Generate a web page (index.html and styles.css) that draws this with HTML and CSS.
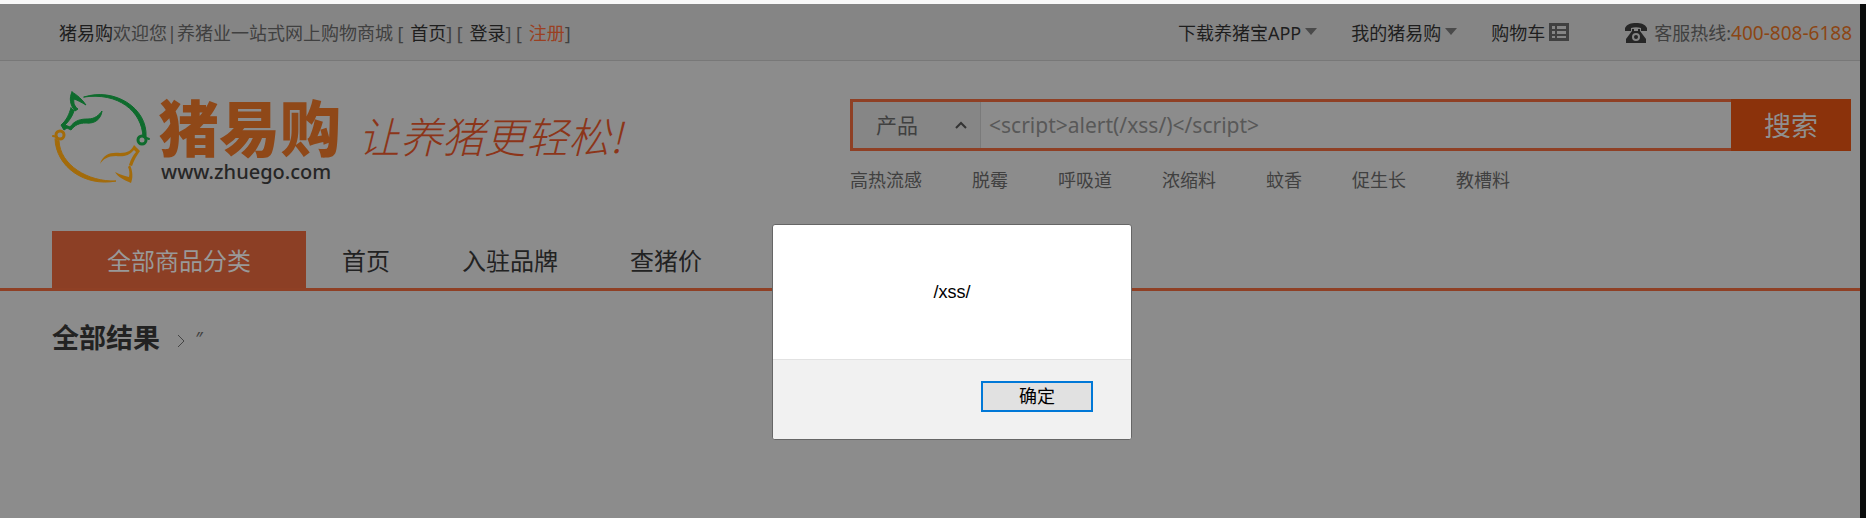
FILE: index.html
```html
<!DOCTYPE html>
<html lang="zh-CN">
<head>
<meta charset="utf-8">
<title>猪易购</title>
<link rel="stylesheet" href="styles.css">
</head>
<body>
<div class="page">
  <header class="topbar">
    <p class="welcome"><a class="dark" href="#">猪易购</a>欢迎您|养猪业一站式网上购物商城 [ <a class="dark entry" href="#">首页</a>] [ <a class="dark entry" href="#">登录</a>] [ <a class="register entry" href="#">注册</a>]</p>
    <nav class="quick">
      <a class="quick-link" href="#">下载养猪宝APP<span class="arrow"></span></a>
      <a class="quick-link" href="#">我的猪易购<span class="arrow"></span></a>
      <a class="quick-link" href="#">购物车<svg class="cart-icon" viewBox="0 0 20 18"><path fill="#404040" d="M0 0h20v18H0z"/><path fill="#858585" d="M3 3h3v3H3zM8 3h9v3H8zM3 8h3v3H3zM8 8h9v3H8zM3 13h3v2H3zM8 13h9v2H8z"/></svg></a>
    </nav>
    <p class="hotline"><svg class="phone-icon" viewBox="0 0 22 20"><path fill="#262626" fill-rule="evenodd" d="M0 8V5C2 1 6 0 11 0s9 1 11 5v3h-6V5c-3-1-7-1-10 0v3zM7 6h2v2h4V6h2v2l6 8v4H1v-4l6-8zM11 10a4 4 0 1 0 0 8 4 4 0 0 0 0-8z"/><circle cx="11" cy="14" r="2" fill="#262626"/></svg>客服热线:<span class="number">400-808-6188</span></p>
  </header>

  <section class="masthead">
    <a class="brand" href="#">
      <svg class="pigs" viewBox="0 0 98 94" fill="none" stroke-linecap="round" stroke-linejoin="round">
        <g fill="#0e6b2d" stroke="#0e6b2d">
          <path d="M20 1C25 4 30 8 34 14C29 11 25 9 22 8C21 12 23 16 26 18L23 20C18 14 17 7 20 1ZM19 17L22 20C20 26 17 30 13 34L18 36C23 29 29 28 36 28C43 28 47 24 50 20C49 28 43 33 34 32C27 32 23 34 19 39L15 37L12 39L9 34C15 29 17 23 19 17Z"/>
          <path d="M32 6C62-4 96 17 94 46H91C90 20 66 1 32 6Z"/>
        </g>
        <circle cx="90" cy="49" r="4" stroke="#0e6b2d" stroke-width="3"/><path stroke="#0e6b2d" stroke-width="2" d="M92 46l5 2"/>
        <circle cx="8" cy="44" r="4" stroke="#a36b0a" stroke-width="3"/><path stroke="#a36b0a" stroke-width="2" d="M1 45l4 1"/>
        <path fill="#a36b0a" stroke="#a36b0a" d="M3 48C4 76 33 96 64 90C36 91 8 74 7 50Z"/>
        <path fill="#a36b0a" d="M48 73C51 63 59 61 68 62C76 62 80 59 82 54L88 60C85 64 82 69 80 75L77 74C79 68 81 64 84 61L82 59C77 65 71 66 64 65C56 65 51 68 48 73ZM78 74C81 81 81 87 79 92C72 89 66 86 63 81C69 84 73 85 77 86C78 82 77 78 76 76Z"/>
      </svg>
      <span class="brand-text"><span class="brand-name">猪易购</span><span class="brand-url">www.zhuego.com</span></span>
    </a>
    <p class="slogan">让养猪更轻松!</p>
    <div class="search-area">
      <form class="search">
        <button class="type" type="button">产品<svg class="caret" viewBox="0 0 12 8"><path d="M1 7l5-5 5 5" fill="none" stroke="#333" stroke-width="2"/></svg></button>
        <input class="query" type="text" aria-label="搜索" value="&lt;script&gt;alert(/xss/)&lt;/script&gt;">
        <button class="submit" type="button">搜索</button>
      </form>
      <nav class="tags"><a href="#">高热流感</a><a href="#">脱霉</a><a href="#">呼吸道</a><a href="#">浓缩料</a><a href="#">蚊香</a><a href="#">促生长</a><a href="#">教槽料</a></nav>
    </div>
  </section>

  <nav class="mainnav">
    <a class="all" href="#">全部商品分类</a>
    <a class="item" href="#">首页</a>
    <a class="item" href="#">入驻品牌</a>
    <a class="item" href="#">查猪价</a>
  </nav>

  <main class="results">
    <h1>全部结果</h1>
    <svg class="crumb" viewBox="0 0 8 14"><path d="M1 1l6 6-6 6" fill="none" stroke="#444"/></svg>
    <span class="keyword">″</span>
  </main>
</div>

<div class="dialog" role="alertdialog" aria-labelledby="message">
  <p class="message" id="message">/xss/</p>
  <div class="actions"><button class="ok" type="button">确定</button></div>
</div>
</body>
</html>
```
FILE: styles.css
```css
* { box-sizing: border-box; }
body, p, h1 { margin: 0; }
body {
  min-height: 100vh;
  display: flex;
  position: relative;
  background: #8c8c8c;
  border-top: 4px solid #f8f8f8;
  color: #404040;
  font: 18px/24px "Noto Sans", "Noto Sans CJK SC", sans-serif;
}
a { color: inherit; text-decoration: none; }
button, input { font: inherit; }
.page { flex: 1; min-width: 0; border-right: 6px solid #0a0c0c; }

.topbar {
  display: flex;
  align-items: center;
  height: 57px;
  padding: 2px 8px 0 59px;
  background: #858585;
  border-bottom: 1px solid #787878;
  white-space: nowrap;
}
.dark { color: #1e1e1e; }
.entry { padding-left: 2px; }
.register { color: #9a4022; }
.quick { display: flex; gap: 34px; margin-left: auto; color: #1e1e1e; }
.quick-link { display: flex; align-items: center; }
.arrow { margin: 0 0 4px 4px; border: 6px solid transparent; border-top: 7px solid #4a4a4a; border-bottom: 0; }
.cart-icon { width: 20px; height: 18px; margin: 0 0 2px 4px; }
.hotline { display: flex; align-items: center; margin-left: 56px; }
.phone-icon { width: 22px; height: 20px; margin-right: 7px; }
.number { color: #8c4614; font-size: 19px; }

.masthead { display: flex; align-items: flex-start; height: 170px; padding: 30px 9px 0 52px; }
.brand { display: flex; gap: 8px; }
.pigs { width: 98px; height: 94px; }
.brand-text { display: flex; flex-direction: column; padding-top: 3px; }
.brand-name { color: #8f4818; font: 900 61px/64px "Noto Sans CJK SC", sans-serif; }
.brand-url { padding: 2px 0 0 3px; color: #262626; font: 500 20px/24px "Noto Sans", sans-serif; }
.slogan { margin: 20px 0 0 17px; color: #8c3519; font: italic 300 42px/48px "Noto Sans CJK SC", sans-serif; white-space: nowrap; }
.search-area { width: 1001px; margin: 8px 0 0 auto; }
.search { display: flex; height: 52px; border: 3px solid #8f4025; border-right: 0; font-size: 21px; }
.type {
  display: flex;
  align-items: center;
  justify-content: space-between;
  width: 128px;
  padding: 0 13px 0 23px;
  border: 0;
  border-right: 1px solid #7a7a7a;
  background: #868686;
  color: #404040;
}
.caret { width: 12px; height: 8px; }
.query { flex: 1; min-width: 0; padding: 0 8px; border: 0; outline: 0; background: transparent; color: #585858; }
.submit { width: 120px; margin: -3px 0; padding: 2px 0 0; border: 0; background: #8b320b; color: #909090; font-size: 27px; }
.tags { display: flex; gap: 50px; margin-top: 17px; }

.mainnav { display: flex; padding-left: 52px; border-bottom: 3px solid #8f4025; color: #222; font-size: 24px; line-height: 55px; }
.all { width: 254px; padding-top: 2px; background: #8c3f25; color: #999; text-align: center; }
.item { padding: 2px 36px 0; }

.results { display: flex; align-items: center; padding: 27px 52px; }
.results h1 { color: #222; font-size: 27px; line-height: 40px; }
.crumb { width: 8px; height: 14px; margin: 6px 10px 0 17px; }
.keyword { font-style: italic; }

.dialog {
  position: absolute;
  top: 220px;
  left: calc(50% - 161px);
  width: 360px;
  background: #fff;
  border: 1px solid #666;
  border-radius: 3px;
  color: #000;
  overflow: hidden;
}
.message { font: 18px/134px "Liberation Sans", sans-serif; text-align: center; }
.actions { display: flex; justify-content: flex-end; height: 80px; padding: 21px 38px 0 0; border-top: 1px solid #e2e2e2; background: #f1f1f1; }
.ok { width: 112px; height: 31px; padding: 0 0 2px; border: 2px solid #0078d7; background: #e1e1e1; color: #000; line-height: 24px; }
```
